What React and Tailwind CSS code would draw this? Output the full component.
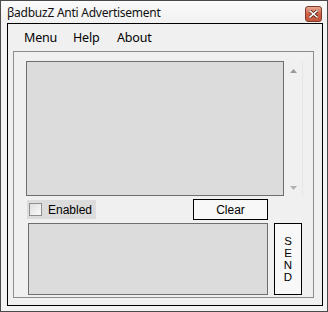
export default function App() {
  const ui = { fontFamily: '"Noto Sans", "Open Sans", sans-serif' };
  const ms = { fontFamily: '"Liberation Sans", Arial, sans-serif' };

  return (
    <div className="w-[328px] h-[312px] border border-[#4a4a4a] bg-[#f3f3f3] flex flex-col" style={ui}>
      {/* title bar */}
      <div className="h-[22px] flex items-center justify-between pl-[6px] pr-[5px] bg-gradient-to-b from-[#fafafa] to-[#f1f1f1]">
        <span className="text-[12px] tracking-[-0.25px] text-[#111] leading-none pt-[2px]">βadbuzZ Anti Advertisement</span>
        <div className="w-[17px] h-[16px] mt-[4px] rounded-[3px] border border-[#7b3a2c] bg-gradient-to-b from-[#e8a994] via-[#cf5d44] to-[#c2573c] flex items-center justify-center">
          <svg width="9" height="8" viewBox="0 0 9 8">
            <path d="M1 1 L8 7 M8 1 L1 7" stroke="#4a1a10" strokeWidth="3" strokeLinecap="square" />
            <path d="M1 1 L8 7 M8 1 L1 7" stroke="#fff" strokeWidth="1.6" strokeLinecap="square" />
          </svg>
        </div>
      </div>

      {/* client area */}
      <div className="ml-[6px] w-[316px] h-[283px] border border-black bg-[#f0f0f0] flex flex-col">
        {/* menu */}
        <div className="h-[27px] flex items-center pt-[2px] text-[12.5px] tracking-[-0.2px] text-black pl-[16px]">
          <span className="w-[49px]">Menu</span>
          <span className="w-[44px]">Help</span>
          <span>About</span>
        </div>

        {/* panel */}
        <div className="ml-[5px] w-[301px] h-[247px] border border-[#8c8c8c] flex flex-col" style={ms}>
          <div className="mt-[9px] flex">
            <div className="ml-[12px] w-[258px] h-[135px] border border-[#6e6e6e] bg-[#dcdcdc]" />
            <div className="ml-[1px] w-[27px] h-[135px] flex">
              <div className="w-[17px] flex flex-col items-center justify-between pt-[8px] pb-[6px]">
                <svg width="7" height="4" viewBox="0 0 7 4"><path d="M3.5 0 L7 4 L0 4 Z" fill="#9a9a9a" /></svg>
                <svg width="7" height="4" viewBox="0 0 7 4"><path d="M0 0 L7 0 L3.5 4 Z" fill="#b0b0b0" /></svg>
              </div>
              <div className="w-px bg-[#e6e6e6]" />
            </div>
          </div>

          <div className="mt-[3px] flex h-[21px]">
            <div className="ml-[13px] mt-[1px] w-[69px] h-[19px] bg-[#dcdcdc] flex items-center pl-[2px]">
              <div className="w-[13px] h-[13px] border border-[#8e8f8f] bg-gradient-to-br from-[#dedede] to-[#fbfbfb]" />
              <span className="ml-[6px] text-[12px] text-black">Enabled</span>
            </div>
            <div className="ml-[97px] w-[75px] h-[21px] border border-black bg-[#f8f8f8] flex items-center justify-center text-[12px] text-black">
              Clear
            </div>
          </div>

          <div className="mt-[3px] flex">
            <div className="ml-[14px] w-[240px] h-[72px] border border-[#6e6e6e] bg-[#dcdcdc]" />
            <div className="ml-[6px] w-[28px] h-[72px] border border-black bg-[#f8f8f8] flex flex-col items-center justify-center text-[11.5px] leading-[12px] text-black">
              <span>S</span>
              <span>E</span>
              <span>N</span>
              <span>D</span>
            </div>
          </div>
        </div>
      </div>
    </div>
  );
}
